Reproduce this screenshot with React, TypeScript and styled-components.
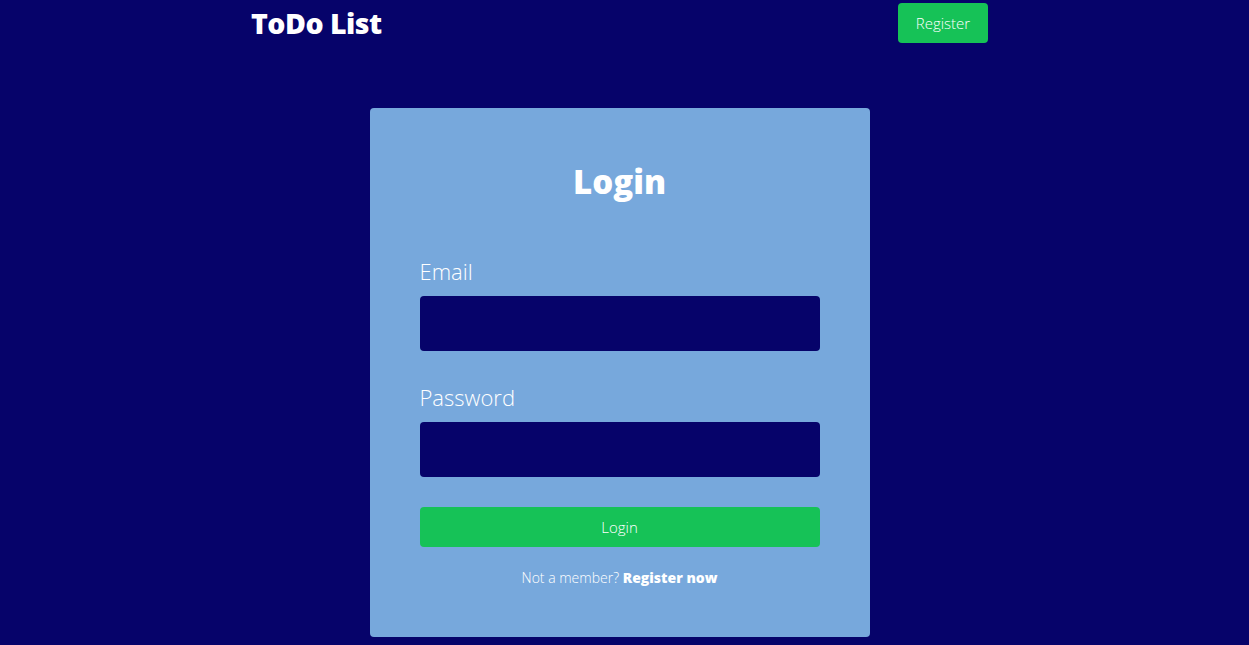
import * as React from 'react';
import styled, { createGlobalStyle } from 'styled-components';

const GlobalStyle = createGlobalStyle`
  html, body {
    margin: 0;
    padding: 0;
    background-color: #06036a;
    font-family: 'Open Sans', 'Liberation Sans', sans-serif;
    color: #ffffff;
  }
  * {
    box-sizing: border-box;
  }
`;

export default function App() {
  return (
    <>
      <GlobalStyle />
      <Page>
        <Header>
          <Brand>ToDo List</Brand>
          <HeaderButton>Register</HeaderButton>
        </Header>
        <Card>
          <Title>Login</Title>
          <Field $spacing={33}>
            <Label htmlFor="email">Email</Label>
            <Input id="email" type="email" />
          </Field>
          <Field $spacing={30}>
            <Label htmlFor="password">Password</Label>
            <Input id="password" type="password" />
          </Field>
          <SubmitButton>Login</SubmitButton>
          <Footnote>
            Not a member? <strong>Register now</strong>
          </Footnote>
        </Card>
      </Page>
    </>
  );
}

const Page = styled.div`
  min-height: 645px;
  padding-right: 10px;
  display: flex;
  flex-direction: column;
  align-items: center;
`;

const Header = styled.header`
  width: 737px;
  height: 46px;
  display: flex;
  align-items: center;
  justify-content: space-between;
`;

const Brand = styled.h1`
  margin: 0;
  font-size: 28.5px;
  font-weight: 800;
  letter-spacing: -0.5px;
`;

const HeaderButton = styled.button`
  width: 90px;
  height: 40px;
  border: none;
  border-radius: 4px;
  background-color: #16c257;
  color: #ffffff;
  font-family: inherit;
  font-size: 15px;
  font-weight: 300;
`;

const Card = styled.main`
  width: 500px;
  margin-top: 62px;
  padding: 50px 50px 48px;
  border-radius: 4px;
  background-color: #77a8dc;
  display: flex;
  flex-direction: column;
`;

const Title = styled.h2`
  margin: 0 0 52px;
  text-align: center;
  font-size: 33px;
  font-weight: 800;
  line-height: 48px;
`;

const Field = styled.div<{ $spacing: number }>`
  display: flex;
  flex-direction: column;
  margin-bottom: ${p => p.$spacing}px;
`;

const Label = styled.label`
  font-size: 22px;
  font-weight: 300;
  line-height: 26px;
  margin-bottom: 12px;
`;

const Input = styled.input`
  height: 55px;
  border: none;
  border-radius: 4px;
  background-color: #06036a;
  color: #ffffff;
  padding: 0 12px;
  font-family: inherit;
  font-size: 16px;
  outline: none;
`;

const SubmitButton = styled.button`
  height: 40px;
  border: none;
  border-radius: 4px;
  background-color: #16c257;
  color: #ffffff;
  font-family: inherit;
  font-size: 15px;
  font-weight: 300;
`;

const Footnote = styled.p`
  margin: 20px 0 0;
  text-align: center;
  font-size: 14px;
  font-weight: 300;
  line-height: 22px;

  strong {
    font-weight: 800;
  }
`;
